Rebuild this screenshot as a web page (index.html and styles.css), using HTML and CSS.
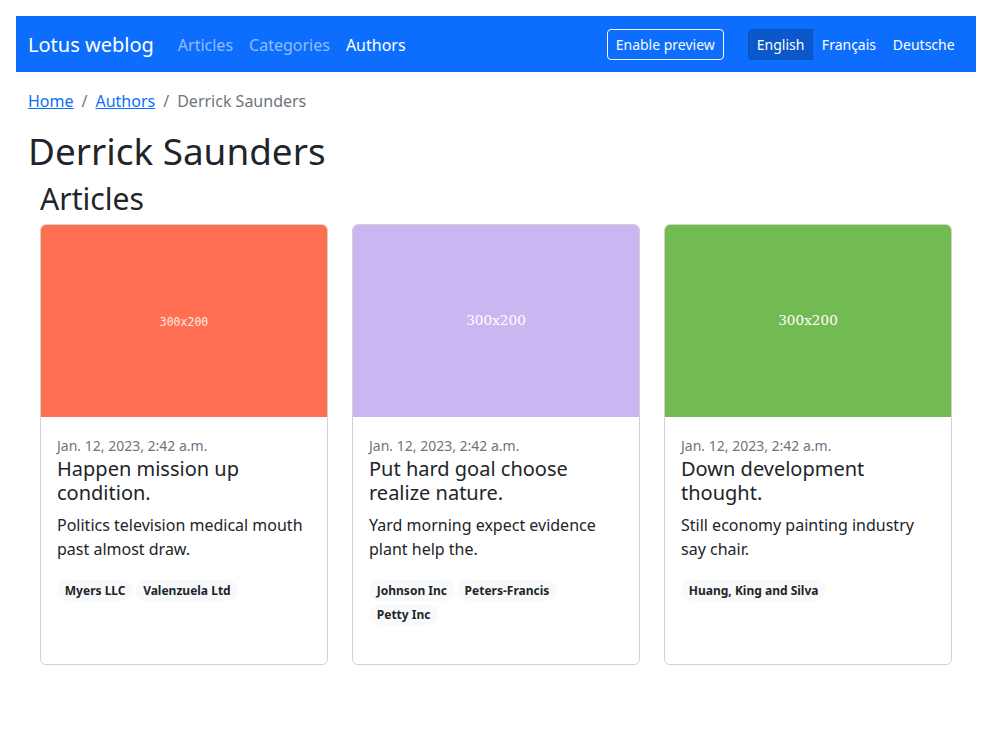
FILE: index.html
```html
<!DOCTYPE html>
<html lang="en">
<head>
<meta charset="utf-8">
<title>Derrick Saunders - Lotus weblog</title>
<link rel="stylesheet" href="styles.css">
</head>
<body>
<div class="page">
  <nav class="navbar">
    <div class="nav-left">
      <a class="brand" href="#">Lotus weblog</a>
      <a class="nav-link" href="#">Articles</a>
      <a class="nav-link" href="#">Categories</a>
      <a class="nav-link active" href="#">Authors</a>
    </div>
    <div class="nav-right">
      <button class="btn btn-outline">Enable preview</button>
      <div class="btn-group">
        <button class="btn btn-lang active">English</button>
        <button class="btn btn-lang">Français</button>
        <button class="btn btn-lang">Deutsche</button>
      </div>
    </div>
  </nav>

  <main class="content">
    <ol class="breadcrumb">
      <li><a href="#">Home</a></li>
      <li class="sep">/</li>
      <li><a href="#">Authors</a></li>
      <li class="sep">/</li>
      <li class="current">Derrick Saunders</li>
    </ol>
    <h1 class="title">Derrick Saunders</h1>

    <section class="articles">
      <h2 class="section-title">Articles</h2>
      <div class="cards">
        <article class="card">
          <div class="thumb thumb-orange"><span class="mono">300x200</span></div>
          <div class="card-body">
            <div class="date"><small>Jan. 12, 2023, 2:42 a.m.</small></div>
            <h5 class="card-title">Happen mission up condition.</h5>
            <p class="card-text">Politics television medical mouth past almost draw.</p>
            <div class="badges"><span class="badge">Myers LLC</span><span class="badge">Valenzuela Ltd</span></div>
          </div>
        </article>
        <article class="card">
          <div class="thumb thumb-lavender"><span class="serif">300x200</span></div>
          <div class="card-body">
            <div class="date"><small>Jan. 12, 2023, 2:42 a.m.</small></div>
            <h5 class="card-title">Put hard goal choose realize nature.</h5>
            <p class="card-text">Yard morning expect evidence plant help the.</p>
            <div class="badges"><span class="badge">Johnson Inc</span><span class="badge">Peters-Francis</span><span class="badge">Petty Inc</span></div>
          </div>
        </article>
        <article class="card">
          <div class="thumb thumb-green"><span class="serif">300x200</span></div>
          <div class="card-body">
            <div class="date"><small>Jan. 12, 2023, 2:42 a.m.</small></div>
            <h5 class="card-title">Down development thought.</h5>
            <p class="card-text">Still economy painting industry say chair.</p>
            <div class="badges"><span class="badge">Huang, King and Silva</span></div>
          </div>
        </article>
      </div>
    </section>
  </main>
</div>
</body>
</html>
```

FILE: styles.css
```css
* { box-sizing: border-box; }

body {
  margin: 0;
  font-family: "Noto Sans", "DejaVu Sans", sans-serif;
  font-size: 16px;
  line-height: 1.5;
  color: #212529;
  background: #fff;
}

.page {
  width: 960px;
  margin: 16px auto 0;
}

.navbar {
  background: #0d6efd;
  padding: 9px 13px 7px 12px;
  display: flex;
  align-items: center;
  justify-content: space-between;
}

.nav-left, .nav-right {
  display: flex;
  align-items: center;
}

.brand {
  color: #fff;
  text-decoration: none;
  font-size: 20px;
  line-height: 30px;
  padding: 5px 0;
  margin-right: 16px;
}

.nav-link {
  color: rgba(255, 255, 255, 0.55);
  text-decoration: none;
  padding: 8px;
  line-height: 24px;
}

.nav-link.active { color: #fff; }

.nav-right { gap: 24px; margin-top: -2px; }

.btn {
  font-family: inherit;
  font-size: 14px;
  line-height: 21px;
  padding: 4px 8px;
  border: 1px solid transparent;
  border-radius: 4px;
  color: #fff;
  background: transparent;
  cursor: pointer;
}

.btn-outline { border-color: #f8f9fa; color: #f8f9fa; }

.btn-group { display: flex; }

.btn-lang {
  background: #0d6efd;
  border-color: #0d6efd;
  border-radius: 0;
  padding: 4px 7.4px;
}

.btn-lang:first-child { border-radius: 4px 0 0 4px; padding: 4px 8px; }
.btn-lang:last-child { border-radius: 0 4px 4px 0; }

.btn-lang.active {
  background: #0a58ca;
  border-color: #0a53be;
}

.content { padding: 0 12px; }

.breadcrumb {
  list-style: none;
  margin: 17px 0 16px;
  padding: 0;
  display: flex;
}

.breadcrumb a { color: #0d6efd; text-decoration: underline; }
.breadcrumb .sep { color: #6c757d; padding: 0 8px; }
.breadcrumb .current { color: #6c757d; }

.title {
  font-size: 36.88px;
  font-weight: 400;
  line-height: 1.2;
  margin: 0 0 8px;
}

.articles { padding: 0 12px; }

.section-title {
  font-size: 30.13px;
  font-weight: 400;
  line-height: 1.2;
  margin: 0 0 7px;
}

.cards {
  display: grid;
  grid-template-columns: repeat(3, 288px);
  gap: 24px;
}

.card {
  border: 1px solid rgba(0, 0, 0, 0.175);
  border-radius: 6px;
  overflow: hidden;
  display: flex;
  flex-direction: column;
}

.thumb {
  height: 192px;
  display: flex;
  align-items: center;
  justify-content: center;
  color: #fff;
}

.thumb-orange { background: #ff7052; }
.thumb-lavender { background: #cab7f1; }
.thumb-green { background: #72ba52; }

.mono {
  font-family: "DejaVu Sans Mono", monospace;
  font-size: 11.5px;
  color: #fde8e2;
  margin-top: 2px;
}

.serif {
  font-family: "DejaVu Serif", serif;
  font-size: 13.6px;
  margin-bottom: 2px;
}

.card-body {
  padding: 17px 16px 39px;
  flex: 1;
}

.date { line-height: 23px; color: #6c757d; }
.date small { font-size: 14px; }

.card-title {
  font-size: 20px;
  font-weight: 400;
  line-height: 1.2;
  margin: 0 0 8px;
}

.card-text { margin: 0 0 16px; }

.badges {
  display: flex;
  flex-wrap: wrap;
  column-gap: 2px;
  row-gap: 4px;
  padding-top: 3px;
}

.badge {
  display: inline-block;
  font-size: 12px;
  font-weight: 700;
  line-height: 1;
  padding: 4.2px 7.8px;
  border-radius: 50rem;
  background: #f8f9fa;
  color: #212529;
}
```
